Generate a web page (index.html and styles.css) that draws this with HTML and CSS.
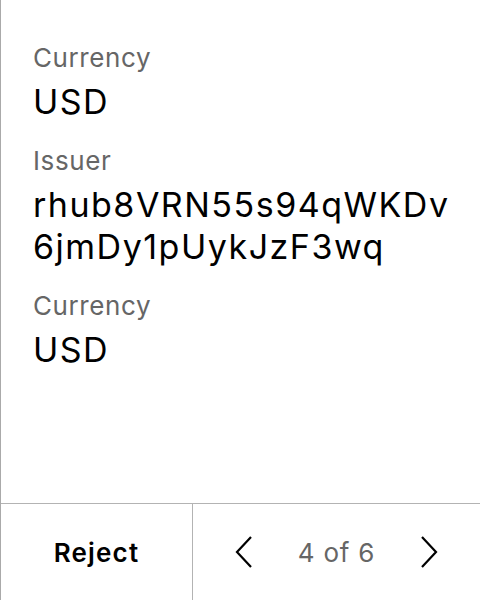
FILE: index.html
```html
<!DOCTYPE html>
<html>
<head>
<meta charset="utf-8">
<link rel="stylesheet" href="styles.css">
</head>
<body>
<div class="screen">
  <div class="content">
    <div class="field">
      <div class="label">Currency</div>
      <div class="value">USD</div>
    </div>
    <div class="field">
      <div class="label">Issuer</div>
      <div class="value">rhub8VRN55s94qWKDv<br>6jmDy1pUykJzF3wq</div>
    </div>
    <div class="field">
      <div class="label">Currency</div>
      <div class="value">USD</div>
    </div>
  </div>
  <div class="footer">
    <div class="reject">Reject</div>
    <div class="pager">
      <svg class="chev" width="18" height="32" viewBox="0 0 18 32"><path d="M16 1 L2 16 L16 31" fill="none" stroke="#000" stroke-width="2.2"/></svg>
      <span class="count">4 of 6</span>
      <svg class="chev" width="18" height="32" viewBox="0 0 18 32"><path d="M2 1 L16 16 L2 31" fill="none" stroke="#000" stroke-width="2.2"/></svg>
    </div>
  </div>
</div>
</body>
</html>
```
FILE: styles.css
```css
html, body {
  margin: 0;
  padding: 0;
  background: #fff;
}
body {
  font-family: Inter, "Noto Sans", sans-serif;
}
.screen {
  width: 480px;
  height: 600px;
  box-sizing: border-box;
  border-left: 1px solid #aaa;
  display: flex;
  flex-direction: column;
}
.content {
  flex: 1;
  padding: 40px 0 0 32px;
}
.field {
  margin-bottom: 20.5px;
}
.label {
  font-size: 26px;
  line-height: 36px;
  letter-spacing: 0.6px;
  color: #666;
}
.value {
  font-size: 34px;
  line-height: 42px;
  letter-spacing: 1.5px;
  color: #000;
  margin-top: 4.5px;
}
.footer {
  height: 96px;
  border-top: 1px solid #b3b3b3;
  display: flex;
}
.reject {
  width: 191px;
  border-right: 1px solid #b3b3b3;
  display: flex;
  align-items: center;
  justify-content: center;
  font-size: 26px;
  font-weight: 600;
  letter-spacing: 1.2px;
  color: #000;
}
.pager {
  flex: 1;
  display: flex;
  align-items: center;
  justify-content: center;
  gap: 45px;
}
.count {
  font-size: 26px;
  letter-spacing: 0.8px;
  color: #666;
}
```
